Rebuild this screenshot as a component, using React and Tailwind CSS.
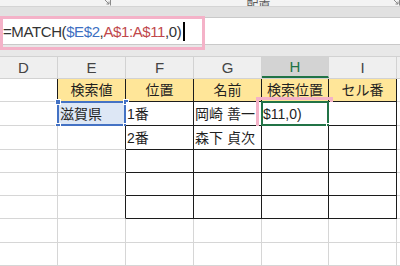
import React from "react";

const cols = [68, 68, 68, 68, 67, 68, 20];
const rowHeights = [23, 24, 24, 23, 23, 23, 24, 23];
const letters = ["D", "E", "F", "G", "H", "I", ""];

const data = [
  ["", "検索値", "位置", "名前", "検索位置", "セル番", ""],
  ["", "滋賀県", "1番", "岡崎 善一", "$11,0)", "", ""],
  ["", "", "2番", "森下 貞次", "", "", ""],
  ["", "", "", "", "", "", ""],
  ["", "", "", "", "", "", ""],
  ["", "", "", "", "", "", ""],
  ["", "", "", "", "", "", ""],
  ["", "", "", "", "", "", ""],
];

// cells that carry the black table border
const inTable = (r, c) => {
  if (r === 0) return c >= 1 && c <= 5;
  if (r === 1) return c >= 1 && c <= 5;
  if (r >= 2 && r <= 5) return c >= 2 && c <= 5;
  return false;
};

const Launcher = () => (
  <svg width="8" height="8" viewBox="0 0 8 8" className="-mt-[3px]">
    <path d="M0.5 0.5 H7.5 V7.5" fill="none" stroke="#8a8a8a" strokeWidth="1" />
    <path d="M2 2 L6 6 M3.5 6 H6 V3.5" fill="none" stroke="#8a8a8a" strokeWidth="1" />
  </svg>
);

const Cell = ({ r, c, text }) => {
  const rightBlack = inTable(r, c) || inTable(r, c + 1);
  const bottomBlack = inTable(r, c) || inTable(r + 1, c);
  const yellow = r === 0 && c >= 1 && c <= 5;
  const selected = r === 1 && c === 1;
  const active = r === 1 && c === 4;

  return (
    <div
      className={`relative shrink-0 border-r border-b flex items-center overflow-visible ${
        rightBlack ? "border-r-[#1c1c1c]" : "border-r-[#d6d6d6]"
      } ${bottomBlack ? "border-b-[#1c1c1c]" : "border-b-[#d6d6d6]"} ${
        yellow ? "bg-[#ffe699] justify-center" : selected ? "bg-[#dde7f5] pl-[2px]" : "bg-white pl-[1px]"
      }`}
      style={{ width: cols[c], height: rowHeights[r] }}
    >
      <span className="whitespace-nowrap text-[14px] leading-none text-[#1f1f1f]">{text}</span>

      {selected && (
        <>
          <div className="absolute -left-[1px] -top-[1px] -right-[1px] -bottom-[1px] border-2 border-[#4472c4]" />
          <div className="absolute -left-[3px] -top-[3px] w-[6px] h-[6px] bg-[#4472c4] border border-white" />
          <div className="absolute -right-[4px] -top-[3px] w-[6px] h-[6px] bg-[#4472c4] border border-white" />
          <div className="absolute -left-[3px] -bottom-[4px] w-[6px] h-[6px] bg-[#4472c4] border border-white" />
          <div className="absolute -right-[4px] -bottom-[4px] w-[6px] h-[6px] bg-[#4472c4] border border-white" />
        </>
      )}

      {active && (
        <>
          <div className="absolute -left-[6px] -top-[5px] -right-[5px] -bottom-[5px] border-[3px] border-[#f4b2c8]" />
          <div className="absolute -left-[1px] -top-[1px] -right-[1px] -bottom-[1px] border-2 border-[#217346]" />
          <div className="absolute -right-[3px] -bottom-[3px] w-[5px] h-[5px] bg-[#217346] border border-white" />
        </>
      )}
    </div>
  );
};

export default function App() {
  return (
    <div className="w-[400px] h-[266px] overflow-hidden bg-white relative font-['Liberation_Sans','Noto_Sans_CJK_JP',sans-serif]">
      {/* ribbon bottom edge */}
      <div className="h-[7px] bg-[#f3f3f3] border-b border-[#d4d4d4] overflow-hidden flex items-end">
        <div className="w-[103px]" />
        <Launcher />
        <div className="flex-1 flex justify-center pl-[14px]">
          <span className="text-[12px] leading-none text-[#5a5a5a] -mb-[4px]">配置</span>
        </div>
        <Launcher />
      </div>

      {/* gray band above formula bar */}
      <div className="h-[10px] bg-[#e1e1e1]" />

      {/* formula bar */}
      <div className="relative h-[28px] bg-white border-y border-[#c9c9c9] flex items-center pl-[3px]">
        <span className="text-[15px] leading-none tracking-[-0.4px] text-[#333] whitespace-nowrap">
          =MATCH(<span className="text-[#3d6fc2]">$E$2</span>,
          <span className="text-[#c0474a]">A$1:A$11</span>,0)
        </span>
        <div className="w-[1.5px] h-[19px] bg-black ml-[2px]" />
        <div className="absolute left-0 -top-[2px] w-[205px] h-[34px] border-[3px] border-[#f4b2c8]" />
      </div>

      {/* gray band below formula bar */}
      <div className="h-[11px] bg-[#e8e8e8]" />

      {/* column headers */}
      <div className="flex -ml-[10px] h-[23px] bg-[#efefef] border-y border-[#d2d2d2]">
        {letters.map((l, c) => (
          <div
            key={c}
            className={`shrink-0 flex items-center justify-center border-r border-[#d2d2d2] text-[15px] leading-none ${
              c === 4 ? "bg-[#d3d3d3] text-[#217346] border-b-2 border-b-[#217346]" : "text-[#444]"
            }`}
            style={{ width: cols[c] }}
          >
            {l}
          </div>
        ))}
      </div>

      {/* rows */}
      {data.map((row, r) => (
        <div key={r} className="flex -ml-[10px]">
          {row.map((text, c) => (
            <Cell key={c} r={r} c={c} text={text} />
          ))}
        </div>
      ))}
    </div>
  );
}
